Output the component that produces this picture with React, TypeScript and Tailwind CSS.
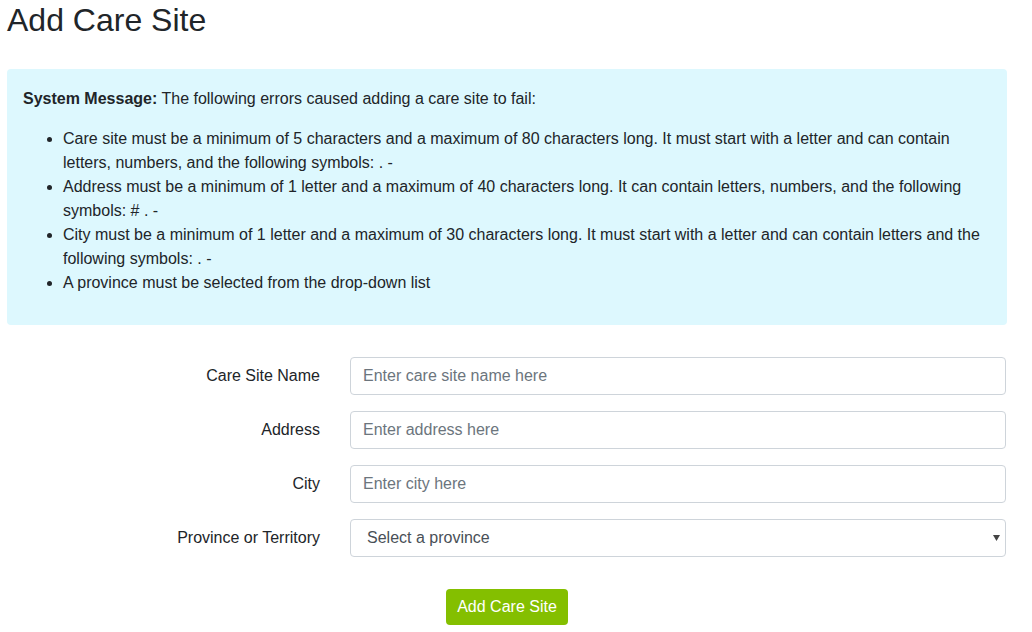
const errors = [
  'Care site must be a minimum of 5 characters and a maximum of 80 characters long. It must start with a letter and can contain letters, numbers, and the following symbols: . -',
  'Address must be a minimum of 1 letter and a maximum of 40 characters long. It can contain letters, numbers, and the following symbols: # . -',
  'City must be a minimum of 1 letter and a maximum of 30 characters long. It must start with a letter and can contain letters and the following symbols: . -',
  'A province must be selected from the drop-down list',
];

const fields = [
  { label: 'Care Site Name', placeholder: 'Enter care site name here' },
  { label: 'Address', placeholder: 'Enter address here' },
  { label: 'City', placeholder: 'Enter city here' },
];

const App = () => {
  return (
    <div className="min-h-screen bg-white px-[7px] text-[16px] text-[#212529] font-['Liberation_Sans',Arial,sans-serif]">
      <div className="w-[1000px]">
        <h1 className="m-0 pt-px text-[32px] leading-[38px] font-medium">Add Care Site</h1>

        <div className="mt-[30px] rounded bg-[#ddf8fe] px-4 pt-[18px] pb-[14px] leading-6">
          <p className="mb-4">
            <strong>System Message:</strong> The following errors caused adding a care site to fail:
          </p>
          <ul className="mb-4 list-disc pl-10">
            {errors.map((e) => (
              <li key={e}>{e}</li>
            ))}
          </ul>
        </div>

        <form className="mt-8 flex flex-col gap-4">
          {fields.map((f) => (
            <div key={f.label} className="flex items-center gap-[30px]">
              <label className="w-[313px] text-right">{f.label}</label>
              <input
                type="text"
                placeholder={f.placeholder}
                className="h-[38px] w-[656px] rounded border border-[#ced4da] px-3 text-[16px] text-[#495057] placeholder:text-[#6c757d] outline-none"
              />
            </div>
          ))}
          <div className="flex items-center gap-[30px]">
            <label className="w-[313px] text-right">Province or Territory</label>
            <div className="relative w-[656px]">
              <select
                defaultValue=""
                className="h-[38px] w-full appearance-none rounded border border-[#ced4da] bg-white pl-4 pr-8 text-[16px] text-[#495057] outline-none"
              >
                <option value="">Select a province</option>
              </select>
              <svg
                className="pointer-events-none absolute right-[6px] top-[16px]"
                width="7"
                height="6"
                viewBox="0 0 7 6"
              >
                <path d="M0 0h7L3.5 6z" fill="#444" />
              </svg>
            </div>
          </div>

          <div className="mt-4 flex justify-center">
            <button
              type="button"
              className="h-9 rounded bg-[#84bf00] px-[11px] text-[16px] text-white"
            >
              Add Care Site
            </button>
          </div>
        </form>
      </div>
    </div>
  );
};

export default App;
